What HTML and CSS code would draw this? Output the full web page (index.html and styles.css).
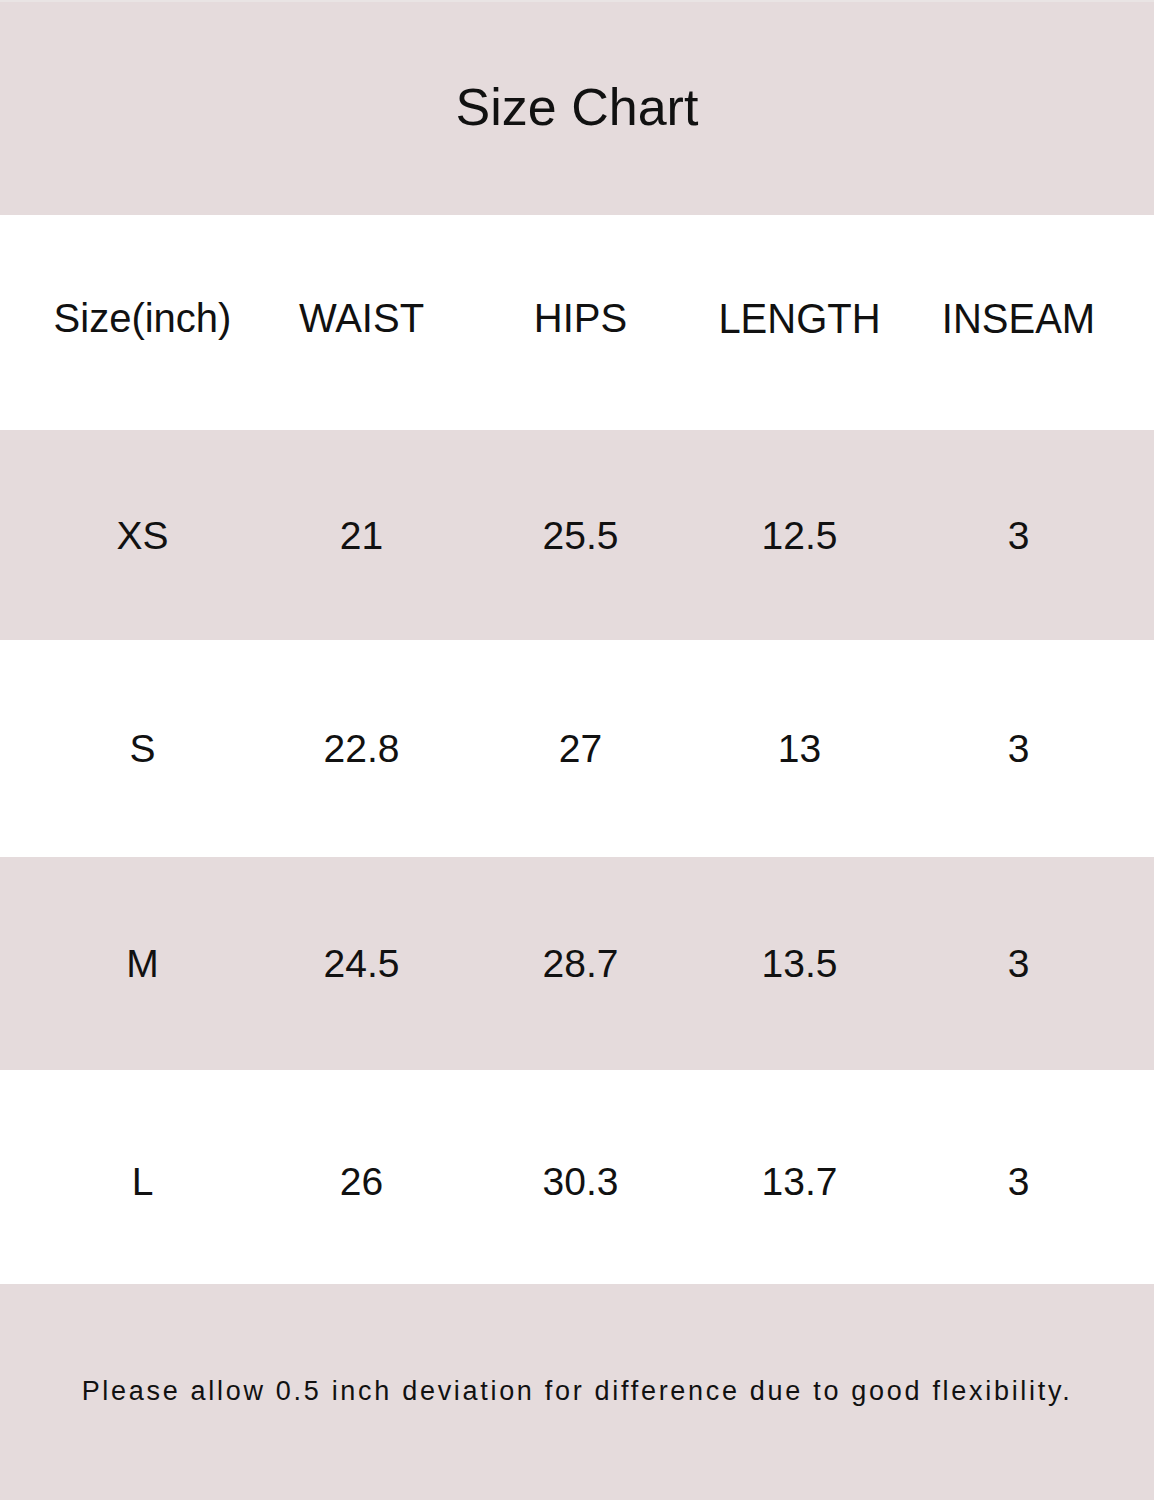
FILE: index.html
```html
<!DOCTYPE html>
<html>
<head>
<meta charset="utf-8">
<link rel="stylesheet" href="styles.css">
</head>
<body>
<div class="chart">
  <div class="band pink title-band"><h1 class="title">Size Chart</h1></div>
  <div class="band white row head">
    <div class="cell">Size(inch)</div><div class="cell">WAIST</div><div class="cell">HIPS</div><div class="cell narrow">LENGTH</div><div class="cell narrow">INSEAM</div>
  </div>
  <div class="band pink row r-xs">
    <div class="cell">XS</div><div class="cell">21</div><div class="cell">25.5</div><div class="cell">12.5</div><div class="cell">3</div>
  </div>
  <div class="band white row r-s">
    <div class="cell">S</div><div class="cell">22.8</div><div class="cell">27</div><div class="cell">13</div><div class="cell">3</div>
  </div>
  <div class="band pink row r-m">
    <div class="cell">M</div><div class="cell">24.5</div><div class="cell">28.7</div><div class="cell">13.5</div><div class="cell">3</div>
  </div>
  <div class="band white row r-l">
    <div class="cell">L</div><div class="cell">26</div><div class="cell">30.3</div><div class="cell">13.7</div><div class="cell">3</div>
  </div>
  <div class="band pink foot"><p class="note">Please allow 0.5 inch deviation for difference due to good flexibility.</p></div>
</div>
</body>
</html>
```
FILE: styles.css
```css
html, body { margin: 0; padding: 0; background: #fff; }
.chart {
  width: 1154px;
  font-family: "Liberation Sans", Arial, sans-serif;
  color: #111;
}
.band { display: flex; align-items: center; }
.pink { background: #e5dbdc; }
.white { background: #fff; }
.title-band { height: 215px; justify-content: center; border-top: 2px solid #e9e4e4; box-sizing: border-box; }
.title { margin: 0; font-size: 52px; font-weight: normal; line-height: 1; padding-bottom: 4px; }
.row {
  display: grid;
  grid-template-columns: repeat(5, 219px);
  padding-left: 33px;
  align-items: center;
  box-sizing: border-box;
}
.head { height: 215px; padding-bottom: 9px; }
.head .cell { font-size: 40px; }
.r-xs { height: 210px; }
.r-s { height: 217px; }
.r-m { height: 213px; }
.r-l { height: 214px; padding-top: 8px; }
.cell { text-align: center; font-size: 39px; line-height: 1; }
.narrow { transform: scaleY(1.06); }
.foot { height: 216px; justify-content: center; }
.note { margin: 0; font-size: 27px; letter-spacing: 2.7px; line-height: 1; padding-bottom: 2px; }
```
